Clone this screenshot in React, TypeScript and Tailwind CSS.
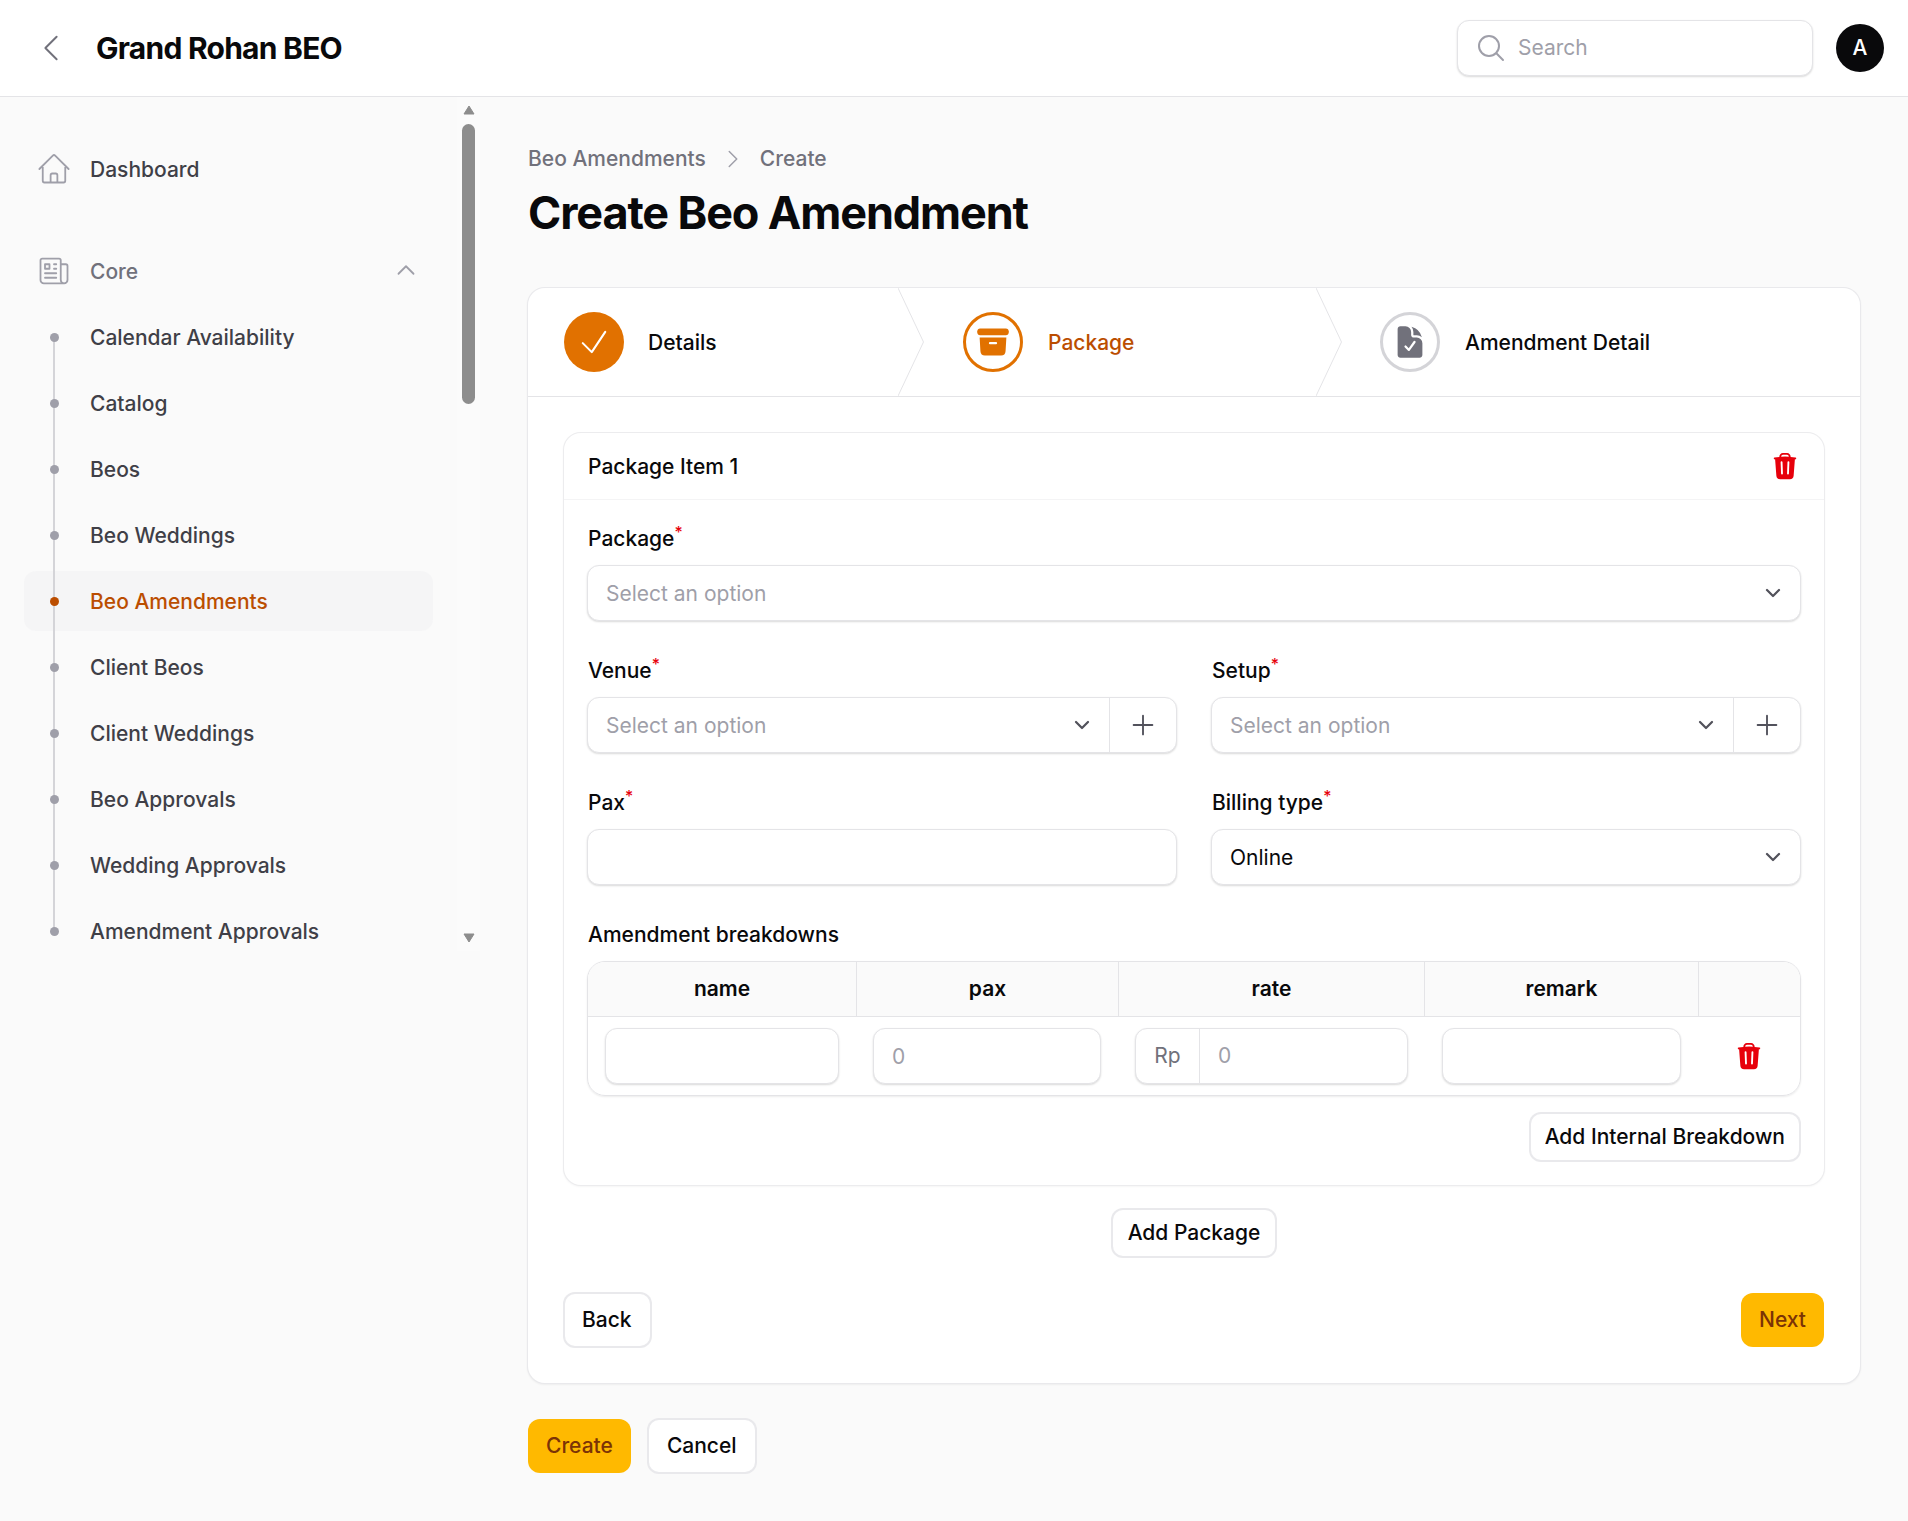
import type { ReactNode } from "react";

const subItems = [
  "Calendar Availability",
  "Catalog",
  "Beos",
  "Beo Weddings",
  "Beo Amendments",
  "Client Beos",
  "Client Weddings",
  "Beo Approvals",
  "Wedding Approvals",
  "Amendment Approvals",
];

function Outline({ d, className, width = 1.5 }: { d: string; className?: string; width?: number }) {
  return (
    <svg viewBox="0 0 24 24" fill="none" stroke="currentColor" strokeWidth={width} strokeLinecap="round" strokeLinejoin="round" className={className}>
      <path d={d} />
    </svg>
  );
}

function TrashIcon() {
  return (
    <svg viewBox="0 0 24 24" fill="currentColor" className="w-[30px] h-[30px] text-red-600">
      <path
        fillRule="evenodd"
        clipRule="evenodd"
        d="M16.5 4.478v.227a48.816 48.816 0 0 1 3.878.512.75.75 0 1 1-.256 1.478l-.209-.035-1.005 13.07a3 3 0 0 1-2.991 2.77H8.084a3 3 0 0 1-2.991-2.77L4.087 6.66l-.209.035a.75.75 0 0 1-.256-1.478A48.567 48.567 0 0 1 7.5 4.705v-.227c0-1.564 1.213-2.9 2.816-2.951a52.662 52.662 0 0 1 3.369 0c1.603.051 2.815 1.387 2.815 2.951Zm-6.136-1.452a51.196 51.196 0 0 1 3.273 0C14.39 3.05 15 3.684 15 4.478v.113a49.488 49.488 0 0 0-6 0v-.113c0-.794.609-1.428 1.364-1.452Zm-.355 5.945a.75.75 0 1 0-1.5.058l.347 9a.75.75 0 1 0 1.499-.058l-.346-9Zm5.48.058a.75.75 0 1 0-1.498-.058l-.347 9a.75.75 0 0 0 1.5.058l.345-9Z"
      />
    </svg>
  );
}

function SelectChevron() {
  return (
    <svg viewBox="0 0 20 20" fill="none" stroke="#52525b" strokeWidth={1.5} strokeLinecap="round" strokeLinejoin="round" className="w-[30px] h-[30px] shrink-0">
      <path d="m6 8 4 4 4-4" />
    </svg>
  );
}

function Label({ children, required }: { children: ReactNode; required?: boolean }) {
  return (
    <div className="h-[30px] leading-[30px] pl-px pt-px text-[21px] font-medium text-zinc-950">
      {children}
      {required && <sup className="text-red-600 font-medium">*</sup>}
    </div>
  );
}

const fieldBox = "h-[56px] rounded-xl border border-zinc-200 bg-white shadow-[0_1px_2px_rgba(0,0,0,0.15)]";

function SelectField({ value, placeholder }: { value?: string; placeholder?: string }) {
  return (
    <div className={`${fieldBox} flex items-center justify-between pl-[18px] pr-[12px] text-[21px]`}>
      <span className={`pt-[2px] ${value ? "text-zinc-950" : "text-zinc-400"}`}>{value ?? placeholder}</span>
      <SelectChevron />
    </div>
  );
}

function SelectWithAdd() {
  return (
    <div className={`${fieldBox} flex items-center text-[21px]`}>
      <div className="flex-1 flex items-center justify-between pl-[18px] pr-[12px]">
        <span className="pt-[2px] text-zinc-400">Select an option</span>
        <SelectChevron />
      </div>
      <div className="w-[67px] h-full border-l border-zinc-200 flex items-center justify-center text-zinc-600">
        <Outline d="M12 4.5v15m7.5-7.5h-15" className="w-[30px] h-[30px]" />
      </div>
    </div>
  );
}

function TextInput({ placeholder, className = "" }: { placeholder?: string; className?: string }) {
  return (
    <input
      placeholder={placeholder}
      className={`${fieldBox} block w-full px-[18px] text-[21px] outline-none placeholder:text-zinc-400 ${className}`}
    />
  );
}

function OutlineButton({ children, className = "" }: { children: ReactNode; className?: string }) {
  return (
    <button className={`rounded-xl border-2 border-zinc-200/80 bg-white text-[21px] font-medium text-zinc-950 ${className}`}>
      {children}
    </button>
  );
}

function Divider() {
  return (
    <svg viewBox="0 0 26 110" fill="none" preserveAspectRatio="none" className="absolute right-[-26px] top-0 w-[26px] h-full">
      <path d="M0 0 L25.5 55 L0 110" stroke="#e4e4e7" strokeWidth={1} />
    </svg>
  );
}

function Sidebar() {
  return (
    <aside className="w-[480px] shrink-0 flex h-[854px]">
      <nav className="w-[457px] pl-6 pr-6 pt-[42px]">
        <div className="flex items-center gap-[18px] px-3 h-[60px] text-[21px] font-medium text-zinc-700">
          <Outline
            d="m2.25 12 8.954-8.955c.44-.439 1.152-.439 1.591 0L21.75 12M4.5 9.75v10.125c0 .621.504 1.125 1.125 1.125H9.75v-4.875c0-.621.504-1.125 1.125-1.125h2.25c.621 0 1.125.504 1.125 1.125V21h4.125c.621 0 1.125-.504 1.125-1.125V9.75M8.25 21h8.25"
            className="w-9 h-9 text-zinc-400"
            width={1.2}
          />
          <span className="pt-[2px]">Dashboard</span>
        </div>
        <div className="mt-[42px] flex items-center gap-[18px] px-3 h-[60px] text-[21px] font-medium text-zinc-500">
          <Outline
            d="M12 7.5h1.5m-1.5 3h1.5m-7.5 3h7.5m-7.5 3h7.5m3-9h3.375c.621 0 1.125.504 1.125 1.125V18a2.25 2.25 0 0 1-2.25 2.25M16.5 7.5V18a2.25 2.25 0 0 0 2.25 2.25M16.5 7.5V4.875c0-.621-.504-1.125-1.125-1.125H4.125C3.504 3.75 3 4.254 3 4.875V18a2.25 2.25 0 0 0 2.25 2.25h13.5M6 7.5h3v3H6v-3Z"
            className="w-9 h-9 text-zinc-400"
            width={1.2}
          />
          <span className="flex-1 pt-[2px]">Core</span>
          <Outline d="m4.5 15.75 7.5-7.5 7.5 7.5" className="w-[24px] h-[24px] text-zinc-400 mr-[3px] mb-[2px]" width={1.8} />
        </div>
        <ul className="mt-[6px] flex flex-col gap-[6px]">
          {subItems.map((label, i) => {
            const active = label === "Beo Amendments";
            return (
              <li
                key={label}
                className={`relative flex items-center gap-[18px] px-3 h-[60px] rounded-xl text-[21px] font-medium ${active ? "bg-zinc-100/80 text-amber-700" : "text-zinc-700"}`}
              >
                <span className="relative w-9 h-9 shrink-0 flex items-center justify-center">
                  {i > 0 && <span className="absolute left-[17px] bottom-[18px] w-[2px] h-[36px] bg-zinc-300" />}
                  {i < subItems.length - 1 && <span className="absolute left-[17px] top-[18px] w-[2px] h-[36px] bg-zinc-300" />}
                  <span className={`relative w-[9px] h-[9px] rounded-full ${active ? "bg-amber-700" : "bg-zinc-400"}`} />
                </span>
                <span className="pt-[2px]">{label}</span>
              </li>
            );
          })}
        </ul>
      </nav>
      {/* scrollbar */}
      <div className="w-[23px] bg-[#fbfbfb] flex flex-col items-center px-[5px]">
        <svg viewBox="0 0 12 10" className="mt-2 w-3 h-[10px] text-[#8d8d8d]" fill="currentColor" stroke="currentColor" strokeWidth={1} strokeLinejoin="round">
          <path d="M6 1 L11 9 L1 9 Z" />
        </svg>
        <div className="mt-[9px] w-[13px] h-[280px] rounded-full bg-[#8d8d8d] shrink-0" />
        <svg viewBox="0 0 12 10" className="mt-auto mb-[8px] w-3 h-[10px] text-[#8d8d8d]" fill="currentColor" stroke="currentColor" strokeWidth={1} strokeLinejoin="round">
          <path d="M6 9 L11 1 L1 1 Z" />
        </svg>
      </div>
    </aside>
  );
}

export default function App() {
  return (
    <div className="min-h-screen bg-[#fafafa] text-zinc-950" style={{ fontFamily: "Inter, 'Noto Sans', sans-serif" }}>
      <header className="h-[97px] bg-white border-b border-zinc-200 flex items-center pl-[33px] pr-6">
        <Outline d="M15.75 19.5 8.25 12l7.5-7.5" className="w-9 h-9 text-zinc-500" width={1.3} />
        <h1 className="ml-[27px] text-[30px] font-bold tracking-tight">Grand Rohan BEO</h1>
        <div className="ml-auto flex items-center gap-[23px]">
          <div className={`${fieldBox} w-[356px] flex items-center gap-[11px] pl-[17px]`}>
            <Outline d="m21 21-5.197-5.197m0 0A7.5 7.5 0 1 0 5.196 5.196a7.5 7.5 0 0 0 10.607 10.607Z" className="w-[32px] h-[32px] text-zinc-400" />
            <input placeholder="Search" className="flex-1 min-w-0 text-[21px] outline-none placeholder:text-zinc-400" />
          </div>
          <div className="w-12 h-12 rounded-full bg-zinc-950 text-white flex items-center justify-center text-[21px] font-medium">A</div>
        </div>
      </header>

      <div className="flex">
        <Sidebar />
        <main className="pl-[47px] pr-[47px] flex-1 pt-[46px]">
          <div className="flex items-center h-[30px] pl-px pt-[2px] text-[21px] font-medium text-zinc-500">
            <span>Beo Amendments</span>
            <Outline d="m8.25 4.5 7.5 7.5-7.5 7.5" className="w-[24px] h-[24px] mx-[15px] text-zinc-400" />
            <span>Create</span>
          </div>
          <h2 className="mt-[13px] pl-px text-[45px] leading-[54px] font-bold tracking-tight">Create Beo Amendment</h2>

          <section className="mt-[47px] rounded-[18px] border border-zinc-200/80 bg-white shadow-[0_1px_2px_rgba(0,0,0,0.05)]">
            <div className="flex h-[109px] border-b border-zinc-200 text-[21px] font-medium">
              <div className="relative w-[370px] flex items-center gap-[24px] pl-[36px]">
                <span className="w-[60px] h-[60px] rounded-full bg-amber-600 text-white flex items-center justify-center">
                  <Outline d="m4.5 12.75 6 6 9-13.5" className="w-9 h-9" width={1.4} />
                </span>
                <span className="pt-[2px]">Details</span>
                <Divider />
              </div>
              <div className="relative w-[418px] flex items-center gap-[25px] pl-[65px] text-amber-700">
                <span className="w-[60px] h-[60px] rounded-full border-[3px] border-amber-600 text-amber-600 flex items-center justify-center">
                  <svg viewBox="0 0 24 24" fill="currentColor" className="w-9 h-9">
                    <path d="M3.375 3C2.339 3 1.5 3.84 1.5 4.875v.75c0 1.036.84 1.875 1.875 1.875h17.25c1.035 0 1.875-.84 1.875-1.875v-.75C22.5 3.839 21.66 3 20.625 3H3.375Z" />
                    <path fillRule="evenodd" clipRule="evenodd" d="M3.087 9l.54 9.176A3 3 0 0 0 6.62 21h10.757a3 3 0 0 0 2.995-2.824L20.913 9H3.087Zm6.163 3.75A.75.75 0 0 1 10 12h4a.75.75 0 0 1 0 1.5h-4a.75.75 0 0 1-.75-.75Z" />
                  </svg>
                </span>
                <span className="pt-[2px]">Package</span>
                <Divider />
              </div>
              <div className="flex items-center gap-[25px] pl-[64px]">
                <span className="w-[60px] h-[60px] rounded-full border-[3px] border-zinc-300 text-zinc-500 flex items-center justify-center">
                  <svg viewBox="0 0 24 24" fill="currentColor" className="w-9 h-9">
                    <path fillRule="evenodd" clipRule="evenodd" d="M9 1.5H5.625c-1.036 0-1.875.84-1.875 1.875v17.25c0 1.035.84 1.875 1.875 1.875h12.75c1.035 0 1.875-.84 1.875-1.875V12.75A3.75 3.75 0 0 0 16.5 9h-1.875a1.875 1.875 0 0 1-1.875-1.875V5.25A3.75 3.75 0 0 0 9 1.5Zm6.61 10.936a.75.75 0 1 0-1.22-.872l-3.236 4.53L9.53 14.47a.75.75 0 0 0-1.06 1.06l2.25 2.25a.75.75 0 0 0 1.14-.094l3.75-5.25Z" />
                    <path d="M12.971 1.816A5.23 5.23 0 0 1 14.25 5.25v1.875c0 .207.168.375.375.375H16.5a5.23 5.23 0 0 1 3.434 1.279 9.768 9.768 0 0 0-6.963-6.963Z" />
                  </svg>
                </span>
                <span className="pt-[2px]">Amendment Detail</span>
              </div>
            </div>

            <div className="px-[35px] pt-[35px] pb-[35px]">
              <div className="rounded-[18px] border border-zinc-200/70 bg-white shadow-[0_1px_2px_rgba(0,0,0,0.04)]">
                <div className="h-[67px] border-b border-zinc-100 flex items-center justify-between pl-[24px] pr-[24px] text-[21px] font-medium">
                  <span className="pt-[1px]">Package Item 1</span>
                  <TrashIcon />
                </div>
                <div className="px-[23px] pt-[23px] pb-[23px]">
                  <div className="flex flex-col gap-[12px]">
                    <Label required>Package</Label>
                    <SelectField placeholder="Select an option" />
                  </div>
                  <div className="mt-[34px] grid grid-cols-2 gap-x-[34px] gap-y-[34px]">
                    <div className="flex flex-col gap-[12px]">
                      <Label required>Venue</Label>
                      <SelectWithAdd />
                    </div>
                    <div className="flex flex-col gap-[12px]">
                      <Label required>Setup</Label>
                      <SelectWithAdd />
                    </div>
                    <div className="flex flex-col gap-[12px]">
                      <Label required>Pax</Label>
                      <TextInput />
                    </div>
                    <div className="flex flex-col gap-[12px]">
                      <Label required>Billing type</Label>
                      <SelectField value="Online" />
                    </div>
                  </div>

                  <div className="mt-[34px]">
                    <Label>Amendment breakdowns</Label>
                    <div className="mt-[12px] rounded-[18px] border border-zinc-200 overflow-hidden shadow-[0_1px_2px_rgba(0,0,0,0.08)]">
                      <div className="grid grid-cols-[269px_262px_306px_274px_1fr] h-[55px] bg-[#fafafa] border-b border-zinc-200 text-[21px] font-semibold text-center leading-[54px] divide-x divide-zinc-200">
                        <div>name</div>
                        <div>pax</div>
                        <div>rate</div>
                        <div>remark</div>
                        <div />
                      </div>
                      <div className="grid grid-cols-[269px_262px_306px_274px_1fr] items-center h-[78px]">
                        <div className="pl-[17px] pr-[18px]">
                          <TextInput />
                        </div>
                        <div className="pl-[16px] pr-[18px]">
                          <TextInput placeholder="0" />
                        </div>
                        <div className="pl-[16px] pr-[17px]">
                          <div className={`${fieldBox} flex items-center text-[21px]`}>
                            <span className="w-[64px] h-full flex items-center justify-center border-r border-zinc-200 text-zinc-500">Rp</span>
                            <input placeholder="0" className="flex-1 min-w-0 px-[18px] outline-none placeholder:text-zinc-400" />
                          </div>
                        </div>
                        <div className="pl-[17px] pr-[18px]">
                          <TextInput />
                        </div>
                        <div className="flex justify-center pr-[2px]">
                          <TrashIcon />
                        </div>
                      </div>
                    </div>
                    <div className="mt-[16px] flex justify-end">
                      <OutlineButton className="h-[50px] px-[14px]">Add Internal Breakdown</OutlineButton>
                    </div>
                  </div>
                </div>
              </div>

              <div className="mt-[22px] flex justify-center">
                <OutlineButton className="h-[50px] px-[15px]">Add Package</OutlineButton>
              </div>

              <div className="mt-[34px] flex items-center justify-between">
                <OutlineButton className="h-[56px] pl-[17px] pr-[18px]">Back</OutlineButton>
                <button className="h-[54px] px-[18px] mr-px rounded-xl bg-amber-400 text-amber-900 text-[21px] font-medium">Next</button>
              </div>
            </div>
          </section>

          <div className="mt-[34px] pl-px pb-[47px] flex items-center gap-[16px]">
            <button className="h-[54px] px-[18px] rounded-xl bg-amber-400 text-amber-900 text-[21px] font-medium">Create</button>
            <OutlineButton className="h-[56px] px-[18px]">Cancel</OutlineButton>
          </div>
        </main>
      </div>
    </div>
  );
}
